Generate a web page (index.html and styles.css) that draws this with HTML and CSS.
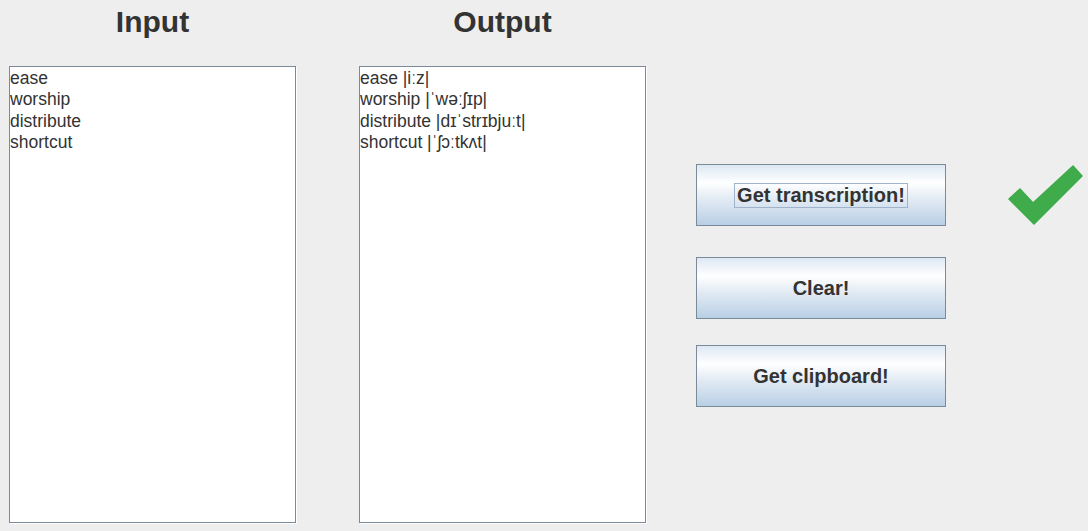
FILE: index.html
```html
<!DOCTYPE html>
<html>
<head>
<meta charset="utf-8">
<link rel="stylesheet" href="styles.css">
</head>
<body>
<div class="app">
  <div class="col">
    <div class="heading">Input</div>
    <div class="panel">
      <div class="line">ease</div>
      <div class="line">worship</div>
      <div class="line">distribute</div>
      <div class="line">shortcut</div>
    </div>
  </div>
  <div class="col col-out">
    <div class="heading">Output</div>
    <div class="panel">
      <div class="line">ease |iːz|</div>
      <div class="line">worship |ˈwəːʃɪp|</div>
      <div class="line">distribute |dɪˈstrɪbjuːt|</div>
      <div class="line">shortcut |ˈʃɔːtkʌt|</div>
    </div>
  </div>
  <div class="buttons">
    <button class="btn btn-first"><span class="focus">Get transcription!</span></button>
    <button class="btn btn-second">Clear!</button>
    <button class="btn btn-third">Get clipboard!</button>
  </div>
  <div class="check">
    <svg width="88" height="75" viewBox="0 0 88 75">
      <polygon points="9,44 20,34 33,48 73,11 82,21 34,69" fill="#3fab4a" stroke="#3fab4a" stroke-width="1.5" stroke-linejoin="round"/>
    </svg>
  </div>
</div>
</body>
</html>
```

FILE: styles.css
```css
html, body {
  margin: 0;
  padding: 0;
  background: #eeeeee;
  width: 1088px;
  height: 531px;
  overflow: hidden;
}

.app {
  display: flex;
  align-items: flex-start;
  padding-left: 9px;
  font-family: "Liberation Sans", Arial, sans-serif;
  color: #333333;
}

.col {
  width: 287px;
  display: flex;
  flex-direction: column;
}

.col-out {
  margin-left: 63px;
}

.heading {
  height: 66px;
  box-sizing: border-box;
  padding-top: 4px;
  text-align: center;
  font-size: 30px;
  font-weight: bold;
  line-height: 36px;
  color: #333333;
}

.panel {
  height: 457px;
  box-sizing: border-box;
  background: #ffffff;
  border: 1px solid #7a8a99;
  box-shadow: 1px 1px 0 #ffffff;
  padding: 1px 0 0 0;
  font-size: 17.5px;
  line-height: 21.3px;
  color: #333333;
}

.line {
  white-space: pre;
}

.buttons {
  margin-left: 50px;
  display: flex;
  flex-direction: column;
  width: 250px;
}

.btn {
  width: 250px;
  height: 62px;
  box-sizing: border-box;
  border: 1px solid #7a8a99;
  background: linear-gradient(to bottom, #dde8f3 0%, #ffffff 30%, #e4ecf4 55%, #b8cfe5 100%);
  font-family: "Liberation Sans", Arial, sans-serif;
  font-weight: bold;
  font-size: 20px;
  color: #333333;
  padding: 0;
  display: flex;
  align-items: center;
  justify-content: center;
}

.btn-first {
  margin-top: 164px;
}

.btn-second {
  margin-top: 31px;
}

.btn-third {
  margin-top: 26px;
}

.focus {
  border: 1px solid #9fb4cb;
  padding: 0 2px;
  line-height: 23px;
}

.check {
  margin-left: 54px;
  margin-top: 155px;
}

.check svg {
  display: block;
}
```
